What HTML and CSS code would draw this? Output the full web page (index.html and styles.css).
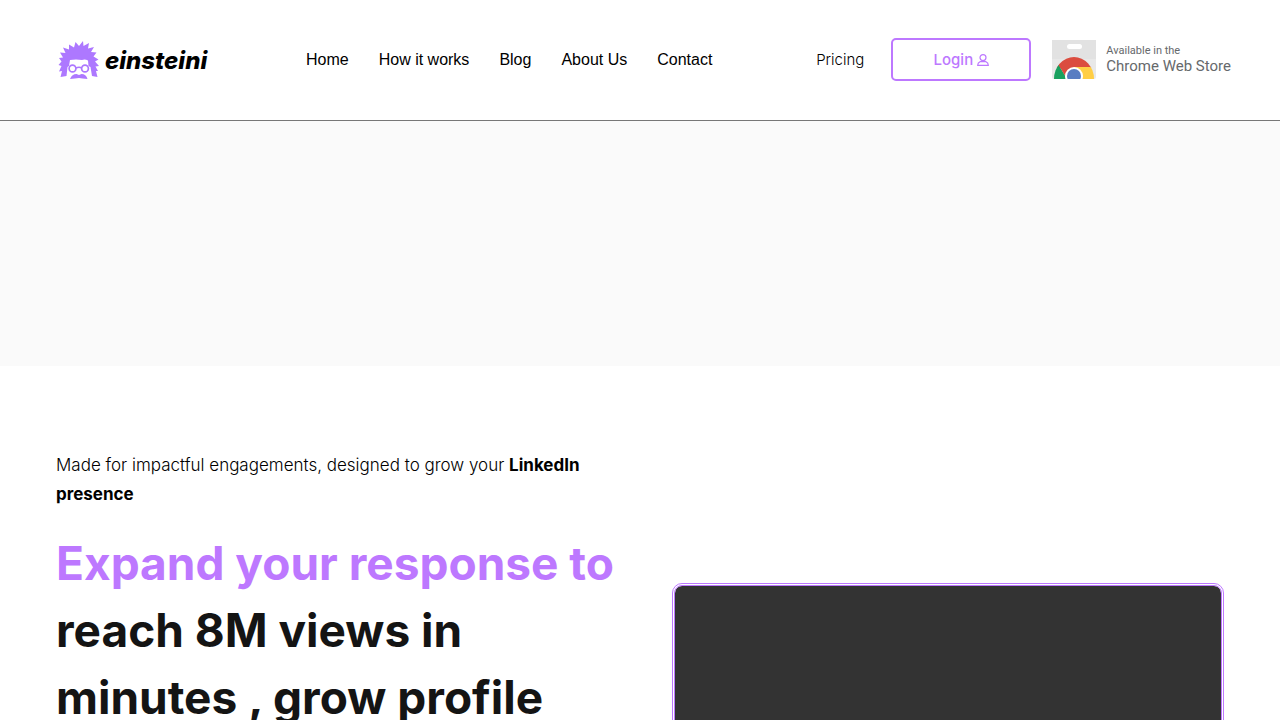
FILE: index.html
```html
<!DOCTYPE html>
<html lang="en">
<head>
<meta charset="utf-8">
<meta name="viewport" content="width=device-width, initial-scale=1">
<title>einsteini</title>
<link rel="stylesheet" href="styles.css">
</head>
<body>
<header class="header">
  <a class="logo" href="#">
    <svg class="logo-mark" viewBox="0 0 42 42" aria-hidden="true">
      <path fill="#ad78ff" d="M2.500 38 4 32 1 32.500 3.500 27 .5 26 3.500 22.500 1 19 5 18.500 2 13.500 7.500 14 5 8.500 11 10.500 11 5.500 16 8.500 17.500 3 21 7 25 2 25.500 7 31 4 30 9.500 36 8 33 13 38.500 13.500 35.500 17.500 40.500 20.500 37 22.500 41 27 37.500 27.500 40 32 38 32 39.500 38 34 37 32.500 28 30.500 27 30 21.500Q27 20 24 21 18 20 12 21L11 27 9.500 28 8.500 37Z"/>
      <g fill="none" stroke="#ad78ff" stroke-width="1.700"><circle cx="14.500" cy="29.500" r="3.400"/><circle cx="27" cy="29.500" r="3.400"/><path d="M18 29q3-1.500 6 0"/></g>
      <path fill="#ad78ff" d="M12 40q2-5 6.500-5l2.500 1 2.500-1q4.500 0 6 5l-5-.5-3.500-.5-4 .5Z"/>
    </svg>
    <span>einsteini</span>
  </a>
  <nav class="nav">
    <a href="#">Home</a>
    <a href="#">How it works</a>
    <a href="#">Blog</a>
    <a href="#">About Us</a>
    <a href="#">Contact</a>
  </nav>
  <div class="actions">
    <a class="pricing" href="#">Pricing</a>
    <a class="login" href="#">Login
      <svg class="user" viewBox="0 0 12 12" aria-hidden="true"><g fill="none" stroke="currentColor" stroke-width="1.200"><circle cx="6" cy="3.600" r="3"/><path d="M3 7.700h6q2.300 1 2.300 3.600H.7Q.7 8.700 3 7.700Z"/></g></svg>
    </a>
    <a class="store" href="#">
      <svg class="store-mark" viewBox="0 0 44 39" aria-hidden="true">
        <defs><clipPath id="bag"><path d="M2 39a20 22 0 0 1 40 0Z"/></clipPath></defs>
        <path fill="#e8e8e8" d="M1 0h42q1 0 1 1v36q0 2-2 2H2q-2 0-2-2V1q0-1 1-1Z"/>
        <path fill="#e2e2e2" d="M0 0h44v19H0Z"/>
        <rect x="15" y="4" width="15" height="5" rx="2.500" fill="#fff"/>
        <g clip-path="url(#bag)"><path fill="#db4c3f" d="M0 16h44v12H0Z"/><path fill="#1aa15f" d="M5 22 15 39H0V26Z"/><path fill="#db4c3f" d="m6 24 9 15h8V26Z"/><path fill="#ffce44" d="M22 27h22v12H22Z"/></g>
        <circle cx="22" cy="36" r="9" fill="#fff"/><circle cx="22" cy="36" r="7" fill="#587dc2"/>
      </svg>
      <span class="store-text"><small>Available in the</small><span>Chrome Web Store</span></span>
    </a>
  </div>
</header>
<main>
  <section class="banner"></section>
  <section class="hero">
    <div class="copy">
      <p class="lead">Made for impactful engagements, designed to grow your <strong>LinkedIn presence</strong></p>
      <h1 class="title"><span>Expand your response to</span> reach 8M views in minutes , grow profile</h1>
    </div>
    <div class="video"></div>
  </section>
</main>
</body>
</html>
```
FILE: styles.css
```css
* { box-sizing: border-box; }
body {
  margin: 0;
  background: #fff;
  color: #000;
  font-family: Inter, "Liberation Sans", sans-serif;
}
a { color: inherit; text-decoration: none; }
.header {
  display: flex;
  align-items: center;
  min-height: 121px;
  padding: 0 49px 0 58px;
  border-bottom: 1px solid #777;
}
.logo {
  display: flex;
  align-items: center;
  gap: 5px;
  width: 248px;
  font-size: 24px;
  font-weight: 800;
  font-style: italic;
}
.logo-mark { width: 42px; height: 42px; }
.nav {
  display: flex;
  gap: 30px;
  font-family: "Liberation Sans", Arial, sans-serif;
  font-size: 16px;
}
.actions {
  display: flex;
  align-items: center;
  margin-left: auto;
  padding-bottom: 1px;
}
.pricing { margin-right: 27px; font-size: 15px; font-weight: 300; }
.login {
  display: flex;
  align-items: center;
  justify-content: center;
  gap: 4px;
  width: 140px;
  height: 43px;
  margin-right: 21px;
  border: 2px solid #bd78ff;
  border-radius: 5px;
  color: #bd78ff;
  font-size: 15px;
  font-weight: 500;
}
.user { width: 12px; height: 12px; }
.store { display: flex; gap: 10px; color: #66696c; }
.store-mark { width: 44px; height: 39px; }
.store-text {
  display: flex;
  flex-direction: column;
  padding-top: 4px;
  font-family: Roboto, sans-serif;
  font-size: 15px;
  line-height: 16px;
  white-space: nowrap;
}
.store-text small { font-size: 11px; line-height: 14px; }
.banner { min-height: 245px; background: #fafafa; }
.hero {
  display: grid;
  grid-template-columns: minmax(0, 1fr) minmax(0, 1fr);
  gap: 64px;
  padding: 85px 56px;
}
.lead {
  margin: 0 0 21px;
  font-size: 17px;
  font-weight: 300;
  line-height: 29px;
}
.lead strong { font-weight: 700; }
.title {
  margin: 0;
  color: #141414;
  font-size: 46px;
  font-weight: 700;
  line-height: 67px;
}
.title span { color: #bd78ff; white-space: nowrap; }
.video {
  aspect-ratio: 16 / 9;
  margin-top: 132px;
  border: 3px double #bd78ff;
  border-radius: 10px;
  background: #333 padding-box;
}
```
